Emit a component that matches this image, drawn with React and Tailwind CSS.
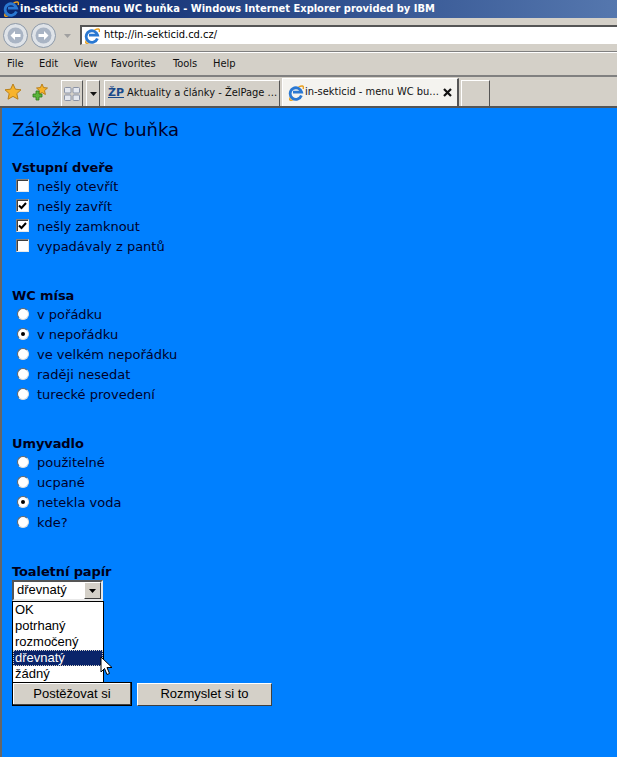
const UI_FONT = 'font-["DejaVu_Sans_Condensed","Noto_Sans",sans-serif]';

function IeLogo({ size = 16, className = '' }) {
  return (
    <svg width={size} height={size} viewBox="0 0 16 16" className={`shrink-0 ${className}`}>
      <path d="M3.2 11.5C.6 14.6 1.6 16.4 5.4 14.4" fill="none" stroke="#e8a020" strokeWidth="1.5" />
      <path d="M10.5 2.2C14 .2 16.2.6 15.2 4" fill="none" stroke="#e8a020" strokeWidth="1.5" />
      <path d="M13.4 10.6A5.8 5.8 0 1 1 13.6 7.2H5" fill="none" stroke="#2a78d2" strokeWidth="2.8" />
    </svg>
  );
}

function NavButton({ flip }) {
  return (
    <div className="w-[25px] h-[25px] rounded-full border border-[#8d99a8] bg-[#dfe3e8] flex items-center justify-center">
      <svg width="17" height="17" viewBox="0 0 17 17" className={flip ? 'rotate-180' : ''}>
        <circle cx="8.5" cy="8.5" r="8" fill="#a9b4c4" />
        <path d="M3.5 8.5 8 4v3h5.5v3H8v3z" fill="#fff" />
      </svg>
    </div>
  );
}

function TitleBar() {
  return (
    <div className="h-[18px] flex items-center bg-gradient-to-r from-[#0a246a] to-[#5577ae]">
      <IeLogo size={16} className="ml-[3px] mr-px" />
      <span className={`text-white font-bold text-[11px] leading-[18px] whitespace-nowrap ${UI_FONT}`}>
        in-sekticid - menu WC buňka - Windows Internet Explorer provided by IBM
      </span>
    </div>
  );
}

function AddressBar() {
  return (
    <div className="h-[34px] flex items-start bg-[#d4d0c8] border-b border-[#808080]">
      <div className="flex items-center ml-[3px] mt-[5px] gap-[3px]">
        <NavButton />
        <NavButton flip />
        <svg width="7" height="4" viewBox="0 0 7 4" className="ml-[5px]">
          <path d="M0 0h7L3.5 4z" fill="#a0a0a0" />
        </svg>
      </div>
      <div className="ml-[9px] mt-[7px] h-[20px] flex-1 flex items-center bg-white border-t-2 border-l-2 border-t-[#555] border-l-[#555] border-b border-b-[#d4d0c8]">
        <IeLogo size={16} className="ml-[2px]" />
        <span className={`ml-[4px] text-[11px] text-black ${UI_FONT}`}>http://in-sekticid.cd.cz/</span>
      </div>
    </div>
  );
}

function MenuBar() {
  const items = [
    ['File', 'w-[32px]'],
    ['Edit', 'w-[35px]'],
    ['View', 'w-[37px]'],
    ['Favorites', 'w-[62px]'],
    ['Tools', 'w-[40px]'],
    ['Help', 'w-[30px]'],
  ];
  return (
    <div className="h-[25px] flex items-center pl-[7px] bg-[#d4d0c8] border-t border-white border-b-2 border-b-[#808080]">
      {items.map(([label, width]) => (
        <span key={label} className={`${width} text-[11px] text-[#111] ${UI_FONT}`}>{label}</span>
      ))}
    </div>
  );
}

function TabBar() {
  return (
    <div className="h-[31px] flex items-end bg-[#d4d0c8] border-b-2 border-[#555]">
      <svg width="18" height="18" viewBox="0 0 18 18" className="ml-[4px] mb-[5px]">
        <path d="M9 1l2.4 5.2 5.6.6-4.2 3.8 1.2 5.6L9 13.4l-5 2.8 1.2-5.6L1 6.8l5.6-.6z" fill="#f7b32b" stroke="#b9801a" />
      </svg>
      <svg width="18" height="18" viewBox="0 0 18 18" className="ml-[9px] mb-[5px]">
        <path d="M11 1l1.6 3.6 3.9.4-3 2.6.9 3.9-3.4-2-3.4 2 .9-3.9-3-2.6 3.9-.4z" fill="#f7b32b" stroke="#b9801a" />
        <path d="M5 8v3H2v3h3v3h3v-3h3v-3H8V8z" fill="#5bb53a" stroke="#2d7a1c" strokeWidth=".8" />
      </svg>
      <div className="ml-[12px] h-[26px] w-[22px] flex items-center justify-center border-t border-l border-white bg-[#d4d0c8] border-r border-r-[#555]">
        <svg width="16" height="14" viewBox="0 0 16 14">
          <g fill="#e4e7ee" stroke="#8b93a5">
            <rect x=".5" y=".5" width="6.5" height="5.5" rx="1" />
            <rect x="9" y=".5" width="6.5" height="5.5" rx="1" />
            <rect x=".5" y="8" width="6.5" height="5.5" rx="1" />
            <rect x="9" y="8" width="6.5" height="5.5" rx="1" />
          </g>
        </svg>
      </div>
      <div className="ml-[3px] h-[26px] w-[14px] flex items-center justify-center border-t border-l border-white border-r border-r-[#555]">
        <svg width="7" height="4" viewBox="0 0 7 4"><path d="M0 0h7L3.5 4z" fill="#111" /></svg>
      </div>
      <div className="ml-[4px] h-[26px] w-[176px] flex items-center border-t border-l border-white border-r border-r-[#555] bg-[#d4d0c8]">
        <span className="ml-[3px] text-[#1a4a8a] font-bold underline text-[11px] font-['DejaVu_Sans',sans-serif]">ŽP</span>
        <span className={`ml-[3px] text-[11px] text-[#111] whitespace-nowrap ${UI_FONT}`}>Aktuality a články - ŽelPage ...</span>
      </div>
      <div className="ml-[2px] h-[28px] w-[177px] flex items-center border-t border-l border-white border-r-2 border-r-[#555] bg-[#f4f3ef]">
        <IeLogo size={16} className="ml-[5px]" />
        <span className={`ml-[1px] w-[138px] text-[11px] text-[#111] whitespace-nowrap ${UI_FONT}`}>in-sekticid - menu WC bu...</span>
        <svg width="9" height="9" viewBox="0 0 9 9" className="shrink-0">
          <path d="M1 1l7 7M8 1L1 8" stroke="#111" strokeWidth="2.2" />
        </svg>
      </div>
      <div className="ml-[2px] h-[26px] w-[29px] border-t border-l border-white border-r border-r-[#555]" />
    </div>
  );
}

function CheckRow({ label, checked }) {
  return (
    <label className="h-[20px] flex items-center">
      <span className="w-[13px] h-[13px] ml-[4px] mb-[3px] flex items-center justify-center bg-white border border-t-[#808080] border-l-[#808080] border-r-[#e8e8e8] border-b-[#e8e8e8] shadow-[inset_1px_1px_0_#404040]">
        {checked && (
          <svg width="9" height="9" viewBox="0 0 9 9">
            <path d="M1 4.5l2.5 2.5L8 2" fill="none" stroke="#000" strokeWidth="2" />
          </svg>
        )}
      </span>
      <span className="ml-[8px]">{label}</span>
    </label>
  );
}

function RadioRow({ label, checked }) {
  return (
    <label className="h-[20px] flex items-center">
      <span className="w-[12px] h-[12px] ml-[5px] mb-[2px] rounded-full flex items-center justify-center bg-white border border-[#666] border-r-[#ddd] border-b-[#ddd]">
        {checked && <span className="w-[4px] h-[4px] rounded-full bg-black" />}
      </span>
      <span className="ml-[8px]">{label}</span>
    </label>
  );
}

function Section({ title, children, className = '' }) {
  return (
    <section className={className}>
      <h3 className="font-bold text-[13px] leading-[18px] text-[#00001a] tracking-[-0.1px]">{title}</h3>
      {children}
    </section>
  );
}

function Dropdown() {
  const options = ['OK', 'potrhaný', 'rozmočený', 'dřevnatý', 'žádný'];
  return (
    <div className="absolute left-0 top-[38px] w-[92px] h-[82px] z-10 bg-white border border-black text-[13px] text-black font-['Liberation_Sans',sans-serif]">
      {options.map((opt) => (
        <div
          key={opt}
          className={
            opt === 'dřevnatý'
              ? 'h-[16px] leading-[16px] pl-[2px] bg-[#0a246a] text-white outline-1 -outline-offset-1 outline-dotted outline-[#d4d0c8]'
              : 'h-[16px] leading-[16px] pl-[2px]'
          }
        >
          {opt}
        </div>
      ))}
      <svg width="13" height="20" viewBox="0 0 13 20" className="absolute left-[87px] top-[54px]">
        <path d="M1 1v15l3.5-3.5L7 18.5l2.5-1L7 11.5h5z" fill="#fff" stroke="#000" />
      </svg>
    </div>
  );
}

export default function App() {
  return (
    <div className="w-[617px] h-[757px] overflow-hidden bg-[#0080ff]">
      <TitleBar />
      <AddressBar />
      <MenuBar />
      <TabBar />
      <main className="border-l-2 border-[#666] h-[649px] pl-[10px] font-['DejaVu_Sans',sans-serif] text-[13px] text-[#00002a]">
        <h1 className="pt-[11px] h-[51px] text-[18px] leading-[22px] text-[#00002a]">Záložka WC buňka</h1>
        <Section title="Vstupní dveře">
          <CheckRow label="nešly otevřít" />
          <CheckRow label="nešly zavřít" checked />
          <CheckRow label="nešly zamknout" checked />
          <CheckRow label="vypadávaly z pantů" />
        </Section>
        <Section title="WC mísa" className="mt-[30px]">
          <RadioRow label="v pořádku" />
          <RadioRow label="v nepořádku" checked />
          <RadioRow label="ve velkém nepořádku" />
          <RadioRow label="raději nesedat" />
          <RadioRow label="turecké provedení" />
        </Section>
        <Section title="Umyvadlo" className="mt-[30px]">
          <RadioRow label="použitelné" />
          <RadioRow label="ucpané" />
          <RadioRow label="netekla voda" checked />
          <RadioRow label="kde?" />
        </Section>
        <Section title="Toaletní papír" className="mt-[30px] relative">
          <div className="-mt-px w-[91px] h-[21px] flex items-center justify-between bg-white border-2 border-t-[#555] border-l-[#555] border-r-[#e8e8e8] border-b-[#e8e8e8] font-['Liberation_Sans',sans-serif] text-[13px] text-black">
            <span className="pl-[3px] pb-px">dřevnatý</span>
            <span className="w-[17px] h-[17px] flex items-center justify-center bg-[#d4d0c8] border border-t-white border-l-white border-r-[#404040] border-b-[#404040]">
              <svg width="7" height="4" viewBox="0 0 7 4"><path d="M0 0h7L3.5 4z" fill="#000" /></svg>
            </span>
          </div>
          <div className="mt-[81px] flex items-center gap-[5px] font-['Liberation_Sans',sans-serif] text-[13px] text-black">
            <button className="w-[120px] h-[24px] bg-[#d4d0c8] border border-black shadow-[inset_-1px_-1px_0_#404040,inset_1px_1px_0_#fff]">Postěžovat si</button>
            <button className="w-[135px] h-[23px] bg-[#d4d0c8] border border-t-white border-l-white border-r-[#404040] border-b-[#404040]">Rozmyslet si to</button>
          </div>
          <Dropdown />
        </Section>
      </main>
    </div>
  );
}
